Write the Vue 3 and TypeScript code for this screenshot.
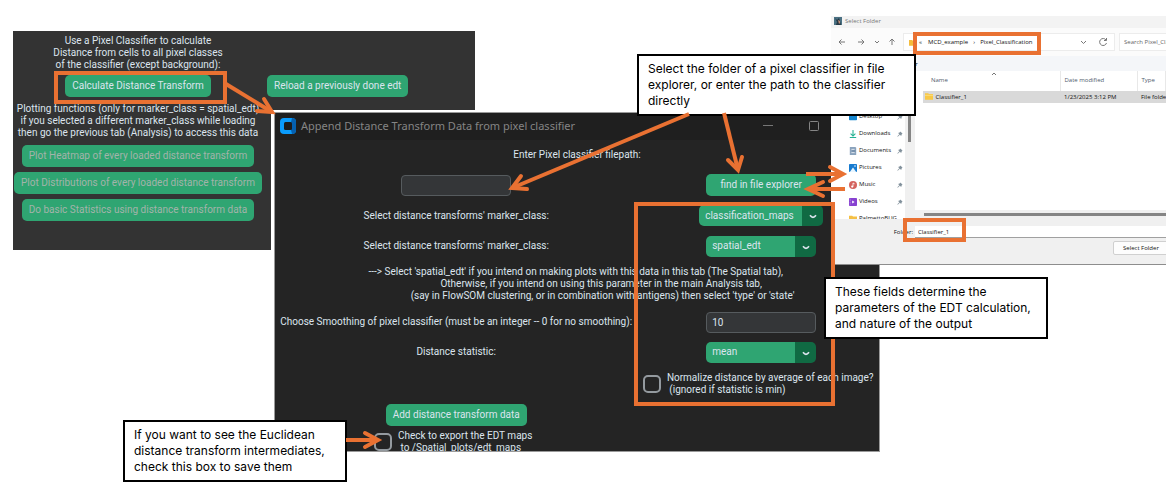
<script setup lang="ts">
import { ref } from 'vue'

interface Place {
  name: string
  icon: 'desktop' | 'downloads' | 'documents' | 'pictures' | 'music' | 'videos' | 'folder'
  pinned: boolean
}

interface Arrow {
  shaft: string
  head: string
}

const places: Place[] = [
  { name: 'Desktop', icon: 'desktop', pinned: true },
  { name: 'Downloads', icon: 'downloads', pinned: true },
  { name: 'Documents', icon: 'documents', pinned: true },
  { name: 'Pictures', icon: 'pictures', pinned: true },
  { name: 'Music', icon: 'music', pinned: true },
  { name: 'Videos', icon: 'videos', pinned: true },
  { name: 'PalmettoBUG', icon: 'folder', pinned: false },
]

const plotActions: string[] = [
  'Plot Heatmap of every loaded distance transform',
  'Plot Distributions of every loaded distance transform',
  'Do basic Statistics using distance transform data',
]

const hint = [
  '---> Select \'spatial_edt\' if you intend on making plots with this data in this tab (The Spatial tab),',
  ' '.repeat(29) + 'Otherwise, if you intend on using this parameter in the main Analysis tab,',
  ' '.repeat(17) + '(say in FlowSOM clustering, or in combination with antigens) then select \'type\' or \'state\'',
].join('\n')

const arrows: Arrow[] = [
  { shaft: 'M226 84L272 112', head: 'M264 99L272 112L257 111' },
  { shaft: 'M689 114L512 188', head: 'M521 176L512 188L527 189' },
  { shaft: 'M724 113L738 170', head: 'M728 160L738 170L742 157' },
  { shaft: 'M806 174H843', head: 'M830 167L843 174L830 181' },
  { shaft: 'M845 189H808', head: 'M823 182L808 189L823 196' },
  { shaft: 'M346 440H378', head: 'M365 433L378 440L365 447' },
]

const path = ref('')
const source = ref('classification_maps')
const markerClass = ref('spatial_edt')
const smoothing = ref('10')
const statistic = ref('mean')
const normalize = ref(false)
const exportMaps = ref(false)
const folder = ref('Classifier_1')
</script>

<template>
  <main class="canvas">
    <section class="spatial">
      <div class="spatial-main">
        <p>Use a Pixel Classifier to calculate<br>Distance from cells to all pixel classes<br>of the classifier (except background):</p>
        <button class="btn calc" type="button">Calculate Distance Transform</button>
        <p>Plotting functions (only for marker_class = spatial_edt)<br>if you selected a different marker_class while loading<br>then go the previous tab (Analysis) to access this data</p>
        <div class="plots">
          <button v-for="a in plotActions" :key="a" class="btn muted" type="button">{{ a }}</button>
        </div>
      </div>
      <button class="btn reload" type="button">Reload a previously done edt</button>
    </section>

    <section class="dialog">
      <header class="dialog-title">
        <svg class="logo" viewBox="0 0 16 16">
          <rect x="0" y="0" width="16" height="16" rx="4" fill="#0a9bfb" />
          <path d="M12 0a4 4 0 0 1 4 4v8a4 4 0 0 1-4 4l-1-4V4z" fill="#0560b0" />
          <rect x="4" y="4" width="8" height="8" rx="1.5" fill="#1c1c1c" />
        </svg>
        <h1>Append Distance Transform Data from pixel classifier</h1>
        <svg class="win-controls" viewBox="0 0 60 12">
          <path d="M1 5.500H11" stroke="#777" fill="none" />
          <rect x="47.500" y="1.500" width="9" height="9" rx="1" stroke="#858585" fill="none" />
        </svg>
      </header>
      <div class="form">
        <label class="span" for="path">Enter Pixel classifier filepath:</label>
        <div><input id="path" v-model="path" class="field" type="text"></div>
        <div class="control"><button class="btn find" type="button">find in file explorer</button></div>

        <label for="source">Select distance transforms' marker_class:</label>
        <div class="control">
          <span class="drop long">
            <select id="source" v-model="source"><option>classification_maps</option></select>
            <svg viewBox="0 0 8 5"><path d="M1 1.200Q4 5.500 7 1.200" /></svg>
          </span>
        </div>

        <label for="marker">Select distance transforms' marker_class:</label>
        <div class="control">
          <span class="drop">
            <select id="marker" v-model="markerClass"><option>spatial_edt</option></select>
            <svg viewBox="0 0 8 5"><path d="M1 1.200Q4 5.500 7 1.200" /></svg>
          </span>
        </div>

        <p class="span hint">{{ hint }}</p>

        <label for="smooth">Choose Smoothing of pixel classifier (must be an integer -- 0 for no smoothing):</label>
        <div class="control"><input id="smooth" v-model="smoothing" class="field" type="text"></div>

        <label for="stat">Distance statistic:</label>
        <div class="control">
          <span class="drop">
            <select id="stat" v-model="statistic"><option>mean</option></select>
            <svg viewBox="0 0 8 5"><path d="M1 1.200Q4 5.500 7 1.200" /></svg>
          </span>
        </div>

        <label class="check right" for="norm">
          <input id="norm" v-model="normalize" type="checkbox">
          <span>Normalize distance by average of each image?<br>&nbsp;(ignored if statistic is min)</span>
        </label>

        <div class="left"><button class="btn" type="button">Add distance transform data</button></div>
        <label class="check left export" for="export">
          <input id="export" v-model="exportMaps" type="checkbox">
          <span>Check to export the EDT maps<br>&nbsp;to /Spatial_plots/edt_maps</span>
        </label>
      </div>
    </section>

    <section class="explorer">
      <header class="ex-title">
        <svg viewBox="0 0 8 8">
          <rect width="8" height="8" fill="#4b7183" />
          <path d="M1 1L3 3L5 1L6 4L7 8H2L3 5Z" fill="#253945" />
          <path d="M4 3l2 1v2l-1 1z" fill="#c58e77" />
        </svg>
        <span>Select Folder</span>
      </header>
      <div class="ex-nav">
        <svg class="nav-icons" viewBox="0 0 60 10">
          <path d="M7 5H1M3.500 2.500L1 5L3.500 7.500M20 5H26M23.500 2.500L26 5L23.500 7.500M37 4L39 6L41 4M54 8V2M51.500 4.500L54 2L56.500 4.500" />
        </svg>
        <nav class="address">
          <svg class="folder-ico" viewBox="0 0 10 8"><path d="M0 1h4l1 1h5v6H0z" fill="#f5bd3d" /></svg>
          <span class="quote">«</span>
          <a href="#">MCD_example</a>
          <span class="sep">›</span>
          <a href="#">Pixel_Classification</a>
          <svg class="address-icons" viewBox="0 0 32 10">
            <path d="M5 4L7.500 6.500L10 4M30 3A3.500 3.500 0 1 0 30.500 6M30.500 1V3.500H28" />
          </svg>
        </nav>
        <input class="search" type="text" aria-label="Search" placeholder="Search Pixel_Classification">
      </div>
      <div class="ex-tools"><span>New folder</span></div>
      <div class="ex-body">
        <nav class="places">
          <a v-for="p in places" :key="p.name" href="#">
            <svg class="place-ico" viewBox="0 0 10 10">
              <rect v-if="p.icon === 'desktop'" y="1" width="10" height="8" rx="1" fill="#1687d0" />
              <path v-else-if="p.icon === 'downloads'" d="M5 0V7M2 4.500L5 7.500L8 4.500M1 9.500H9" stroke="#25b293" stroke-width="1.300" fill="none" />
              <g v-else-if="p.icon === 'documents'">
                <path d="M1 0H8L9 1V10H1Z" fill="#8aa3bd" />
                <path d="M3 3H7M3 7H7" stroke="#eef3f8" />
                <path d="M4 5H8" stroke="#5a7795" />
              </g>
              <g v-else-if="p.icon === 'pictures'">
                <rect width="10" height="10" rx="1" fill="#177bd0" />
                <path d="M1 10L5 4.500L9 10Z" fill="#e8f6ff" />
                <circle cx="7.500" cy="2.500" r="1" fill="#fff" />
              </g>
              <g v-else-if="p.icon === 'music'">
                <circle cx="5" cy="5" r="5" fill="#d5645e" />
                <path d="M5 7V2.500L7 3.500" stroke="#fff" fill="none" />
                <circle cx="4" cy="7" r="1.300" fill="#fff" />
              </g>
              <g v-else-if="p.icon === 'videos'">
                <rect width="10" height="10" rx="1" fill="#8741d0" />
                <path d="M4 3L7 5L4 7Z" fill="#fff" />
                <path d="M1.500 1V9" stroke="#c9a2f0" stroke-dasharray="1 1" />
              </g>
              <path v-else d="M0 1h4l1 1h5v7H0z" fill="#f5c044" />
            </svg>
            <span>{{ p.name }}</span>
            <svg v-if="p.pinned" class="pin" viewBox="0 0 8 8">
              <path d="M4.500 0.500L7.500 3.500L6.500 4L5.500 6.500L3.800 4.900L1 7.500L0.500 7L3.100 4.200L1.500 2.500L4 1.500Z" fill="#82919c" />
            </svg>
          </a>
        </nav>
        <div class="vbar"><i></i></div>
        <div class="files">
          <svg class="caret" viewBox="0 0 6 4"><path d="M1 3L3 1L5 3" /></svg>
          <table>
            <thead>
              <tr><th>Name</th><th>Date modified</th><th>Type</th></tr>
            </thead>
            <tbody>
              <tr>
                <td>
                  <svg class="folder-ico" viewBox="0 0 10 8"><path d="M0 0h4l1 1h5v7H0z" fill="#f8c846" /><path d="M0 2.500H10" stroke="#fde28e" /></svg>
                  Classifier_1
                </td>
                <td>1/23/2025 3:12 PM</td>
                <td>File folder</td>
              </tr>
            </tbody>
          </table>
          <div class="hbar"><i></i></div>
        </div>
      </div>
      <footer class="ex-foot">
        <div class="folder-row">
          <label for="folder">Folder:</label>
          <input id="folder" v-model="folder" type="text">
        </div>
        <button class="choose" type="button">Select Folder</button>
      </footer>
    </section>

    <svg class="marks" width="1176" height="485" viewBox="0 0 1176 485">
      <rect x="56" y="73" width="169" height="29" />
      <rect x="636" y="204" width="197" height="200" />
      <rect x="915" y="34" width="124" height="19" />
      <rect x="905" y="220" width="59" height="20" />
    </svg>

    <aside class="note note-path">Select the folder of a pixel classifier in file<br>explorer, or enter the path to the classifier<br>directly</aside>
    <aside class="note note-fields">These fields determine the<br>parameters of the EDT calculation,<br>and nature of the output</aside>
    <aside class="note note-export">If you want to see the Euclidean<br>distance transform intermediates,<br>check this box to save them</aside>

    <svg class="marks" width="1176" height="485" viewBox="0 0 1176 485">
      <g v-for="a in arrows" :key="a.shaft">
        <path :d="a.shaft" />
        <path class="head" :d="a.head" />
      </g>
    </svg>
  </main>
</template>

<style>
body {
  margin: 0;
  background: #fff;
}
</style>

<style scoped>
.canvas {
  position: relative;
  min-height: 100vh;
  overflow: hidden;
  font-family: Roboto, "Liberation Sans", sans-serif;
  font-size: 10px;
  line-height: 12px;
  color: #dce4ee;
}
.canvas * {
  box-sizing: border-box;
}
p,
h1 {
  margin: 0;
  font-weight: 400;
}
button,
input,
select {
  font: inherit;
  color: inherit;
  margin: 0;
}
a {
  color: inherit;
  text-decoration: none;
}

.spatial {
  position: absolute;
  left: 13px;
  top: 31px;
  width: 462px;
  height: 219px;
  display: flex;
  align-items: flex-start;
  background: #333;
  clip-path: polygon(0 0, 100% 0, 100% 79px, 258px 79px, 258px 100%, 0 100%);
}
.spatial-main {
  width: 250px;
  padding-top: 4px;
  display: flex;
  flex-direction: column;
  align-items: center;
  text-align: center;
  white-space: nowrap;
}
.btn {
  height: 22px;
  padding: 0 7px;
  border: 0;
  border-radius: 5px;
  background: #2fa572;
  white-space: nowrap;
}
.calc {
  margin: 4px 0 6px;
}
.plots {
  display: flex;
  flex-direction: column;
  align-items: center;
  gap: 5px;
  padding-top: 6px;
}
.muted {
  color: #a3b3aa;
}
.reload {
  margin: 44px 0 0 4px;
}

.dialog {
  position: absolute;
  left: 275px;
  top: 113px;
  width: 604px;
  height: 338px;
  overflow: hidden;
  background: #242424;
  box-shadow: 0 0 0 1px #9a9a9a, 0 0 0 3px #fff;
}
.dialog-title {
  display: flex;
  align-items: center;
  height: 27px;
  padding: 0 57px 2px 5px;
  background: #1f1f1f;
}
.dialog-title h1 {
  flex: 1;
  padding-left: 5px;
  font-family: "Noto Sans", sans-serif;
  font-size: 11px;
  color: #858585;
  white-space: nowrap;
}
.logo {
  width: 16px;
  height: 16px;
}
.win-controls {
  width: 60px;
  height: 12px;
}
.form {
  display: grid;
  grid-template-columns: minmax(0, 3fr) minmax(0, 2fr);
  grid-template-rows: 30px 30px 31px 30px 46px 30px 30px 33px 30px 24px;
  align-items: center;
  justify-items: center;
  white-space: nowrap;
}
.form > div {
  display: flex;
}
.form > .control {
  padding-left: 6px;
}
.span {
  grid-column: 1 / 3;
}
.left {
  grid-column: 1;
}
.right {
  grid-column: 2;
}
.hint {
  padding-left: 9px;
  white-space: pre;
}
.field {
  width: 110px;
  height: 21px;
  padding: 0 5px;
  border: 1px solid #565b5e;
  border-radius: 4px;
  background: #343638;
}
.find {
  width: 110px;
}
.drop {
  position: relative;
  display: flex;
  width: 110px;
  height: 21px;
}
.drop.long {
  width: 124px;
}
.drop select {
  width: 100%;
  padding: 0 6px;
  border: 0;
  border-radius: 5px;
  appearance: none;
  background: linear-gradient(to left, #106a43 21px, #2fa572 21px);
}
.drop svg {
  position: absolute;
  right: 6px;
  top: 9px;
  width: 8px;
  height: 5px;
  fill: none;
  stroke: #dce4ee;
  stroke-width: 1.600;
  pointer-events: none;
}
.check {
  display: flex;
  align-items: center;
  gap: 6px;
}
.check.export {
  padding-right: 6px;
}
.check input {
  appearance: none;
  width: 18px;
  height: 18px;
  border: 2px solid #949a9f;
  border-radius: 5px;
}

.explorer {
  position: absolute;
  left: 831px;
  top: 16px;
  width: 335px;
  overflow: hidden;
  background: #fff;
  border-bottom: 1px solid #8d8d8d;
  font-family: "Open Sans", "Noto Sans", sans-serif;
  font-size: 6px;
  line-height: 9px;
  color: #111;
  white-space: nowrap;
}
.ex-title {
  display: flex;
  align-items: center;
  gap: 3px;
  height: 12px;
  padding: 0 3px 2px;
  background: #f3f3f3;
  color: #777;
}
.ex-title svg {
  width: 8px;
  height: 8px;
}
.ex-nav {
  display: flex;
  align-items: center;
  height: 28px;
  background: #fbfbfb;
}
.nav-icons {
  flex: none;
  width: 60px;
  height: 10px;
  margin: 0 5px 0 7px;
}
.nav-icons,
.address-icons,
.caret {
  fill: none;
  stroke: #777;
}
.address {
  flex: none;
  display: flex;
  align-items: center;
  width: 212px;
  height: 18px;
  padding-left: 5px;
  border: 1px solid #ececec;
  background: #fff;
}
.folder-ico {
  width: 8px;
  height: 7px;
}
.quote {
  width: 11px;
  padding-left: 2px;
}
.sep {
  width: 12px;
  text-align: center;
}
.address-icons {
  width: 32px;
  height: 10px;
  margin: 0 6px 0 auto;
}
.search {
  flex: none;
  width: 120px;
  height: 18px;
  margin-left: 4px;
  padding: 0 4px;
  border: 1px solid #ececec;
  background: #fff;
}
.search::placeholder {
  color: #666;
  opacity: 1;
}
.ex-tools {
  height: 15px;
  padding: 4px 0 0 56px;
  background: #f4f6f9;
}
.ex-body {
  display: flex;
  height: 148px;
}
.places {
  width: 74px;
  padding: 37px 2px 0 18px;
  overflow: hidden;
}
.places a {
  display: flex;
  align-items: center;
  gap: 2px;
  height: 17px;
}
.place-ico {
  flex: none;
  width: 8px;
  height: 8px;
}
.pin {
  flex: none;
  width: 6px;
  height: 6px;
  margin-left: auto;
}
.vbar {
  width: 10px;
  padding-left: 3px;
  background: #f0f0f0;
}
.vbar i {
  display: block;
  width: 3px;
  height: 71px;
  background: #858585;
}
.files {
  position: relative;
  flex: 1;
  min-width: 0;
  display: flex;
  flex-direction: column;
  justify-content: space-between;
}
.caret {
  position: absolute;
  left: 76px;
  top: 1px;
  width: 6px;
  height: 4px;
}
table {
  width: 243px;
  margin-left: 8px;
  table-layout: fixed;
  border-collapse: collapse;
}
th,
td {
  padding: 0 0 0 4px;
  font-weight: 400;
  text-align: left;
}
th {
  height: 20px;
  padding-bottom: 2px;
  color: #4f5b6c;
  border-right: 1px solid #e8e8e8;
}
th:first-child {
  width: 137px;
  padding-left: 8px;
}
th:nth-child(2) {
  width: 77px;
}
td {
  height: 12px;
  background: #d9d9d9;
}
td:first-child {
  padding-left: 2px;
}
td .folder-ico {
  margin-right: 1px;
  vertical-align: -1px;
}
.hbar {
  height: 9px;
  padding: 3px 0 0 9px;
  background: #f0f0f0;
}
.hbar i {
  display: block;
  height: 3px;
  background: #858585;
}
.ex-foot {
  height: 45px;
  padding-top: 7px;
  background: #f0f0f0;
}
.folder-row {
  display: flex;
  align-items: center;
}
.folder-row label {
  width: 84px;
  padding-right: 2px;
  text-align: right;
}
.folder-row input {
  flex: 1;
  height: 12px;
  padding: 0 3px;
  border: 0;
  border-bottom: 1px solid #a0a0a0;
  background: #fff;
}
.choose {
  display: block;
  height: 14px;
  width: 60px;
  margin: 3px 0 0 282px;
  padding: 0 9px;
  border: 1px solid #d0d0d0;
  border-radius: 2px;
  background: #fdfdfd;
  text-align: left;
}

.marks {
  position: absolute;
  left: 0;
  top: 0;
  fill: none;
  stroke: #e97132;
  stroke-width: 4;
  pointer-events: none;
}
.head {
  stroke-linecap: round;
}
.note {
  position: absolute;
  padding: 5px 9px;
  border: 2px solid #000;
  background: #fff;
  color: #000;
  font-family: Inter, "Noto Sans", sans-serif;
  font-size: 12px;
  line-height: 16px;
  white-space: nowrap;
}
.note-path {
  left: 637px;
  top: 54px;
  width: 279px;
}
.note-fields {
  left: 824px;
  top: 277px;
  width: 224px;
}
.note-export {
  left: 123px;
  top: 420px;
  width: 224px;
}
</style>
